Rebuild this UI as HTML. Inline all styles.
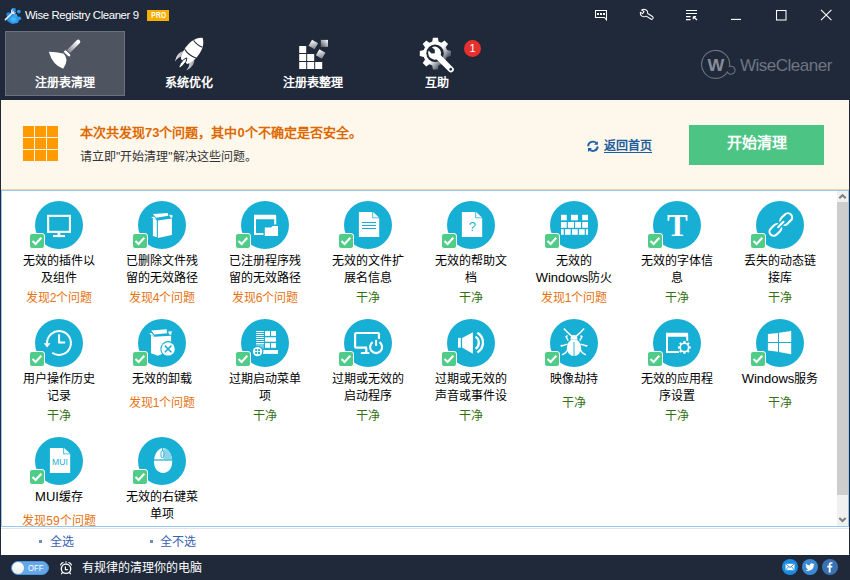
<!DOCTYPE html>
<html lang="zh-CN"><head><meta charset="utf-8">
<style>
*{margin:0;padding:0;box-sizing:border-box}
html,body{width:850px;height:580px;overflow:hidden;background:#202939;font-family:"Liberation Sans",sans-serif}
.abs{position:absolute}
#top{position:absolute;left:0;top:0;width:850px;height:100px;background:#202939}
.title{position:absolute;left:25px;top:7px;font-size:11.4px;letter-spacing:-0.4px;color:#fff;line-height:16px}
.pro{position:absolute;left:147px;top:10px;width:22px;height:11px;background:#f9ae00;color:#fff;font-size:8.6px;font-weight:bold;line-height:11px;text-align:center;letter-spacing:0.4px}
.tab{position:absolute;top:31px;width:120px;height:65px}
.tab.sel{background:#4e5460;border:1px solid #6b717b}
.tablbl{position:absolute;top:76px;width:120px;text-align:center;color:#fff;font-size:12px;font-weight:bold;line-height:15px}
#hdr{position:absolute;left:1px;top:100px;width:848px;height:90px;background:#fdf7ec;border-bottom:1px solid #f0d9a8}
#list{position:absolute;left:1px;top:190px;width:848px;height:337px;background:#fff;border:1px solid #99c6ee;overflow:hidden}
#sel{position:absolute;left:1px;top:527px;width:848px;height:28px;background:#fff;border-top:1px solid #fff}#sel:before{content:"";position:absolute;left:0;top:0;width:848px;height:1px;background:#e4e4e4}
#status{position:absolute;left:0;top:555px;width:850px;height:25px;background:#202939}
.ic{position:absolute}
.cb{position:absolute;width:16px;height:16px}
.cb svg{display:block}
.lb,.st{position:absolute;width:100px;text-align:center;font-size:12px;line-height:17px;white-space:nowrap}
.lb{color:#000}
.st.ok{color:#356f14}
.lat{font-size:13px}
.st.bad{color:#e67312}
.h1{left:79px;top:24px;font-size:13px;font-weight:bold;color:#dd6a00;line-height:17px;white-space:nowrap}
.h2{left:79px;top:49px;font-size:12px;color:#333;line-height:17px;white-space:nowrap}
.lnk{left:603px;top:38px;font-size:12px;text-underline-offset:2px;color:#1f5d9c;line-height:17px;text-decoration:underline;font-weight:bold}
.btn{left:688px;top:25px;width:135px;height:40px;background:#4cc584;color:#fff;font-size:15px;font-weight:bold;text-align:center;line-height:36px}
.selt{top:6px;font-size:12px;line-height:17px;color:#3a62b0}
</style></head><body>
<div id="top">
  <svg class="abs" style="left:3px;top:6px" width="20" height="20" viewBox="0 0 20 20">
    <defs><radialGradient id="tg" cx="0.5" cy="0.6" r="0.6"><stop offset="0" stop-color="#4cc3ff"/><stop offset="1" stop-color="#1570d8"/></radialGradient></defs>
    <path d="M4 8 L9 6 L13 9 L17 12 L15 17 L9 18 L4 15 Z" fill="url(#tg)"/>
    <circle cx="10.7" cy="4" r="2.2" fill="#2a8fe6"/><circle cx="15.8" cy="5.6" r="1.9" fill="#2a9af0"/><circle cx="16.2" cy="12.3" r="1.9" fill="#2a9af0"/><circle cx="12.5" cy="9.5" r="1.8" fill="#3aa8f6"/>
    <circle cx="5.5" cy="8.5" r="2.2" fill="#1f86e8"/><path d="M2.4 13.6 L10.4 5.8" stroke="#e6eef6" stroke-width="1.6" stroke-linecap="round"/><path d="M9.6 3.6 A2 2 0 1 0 12.4 6.2" fill="none" stroke="#e6eef6" stroke-width="1.2"/>
  </svg>
  <div class="title">Wise Registry Cleaner 9</div>
  <div class="pro"><span style="display:inline-block;transform:scaleX(0.78);margin-left:1px">PRO</span></div>
  <div class="tab sel" style="left:5px"></div>
  <svg class="abs" style="left:44px;top:34px" width="42" height="38" viewBox="0 0 42 38">
    <defs><linearGradient id="hg" x1="1" y1="0" x2="0" y2="1"><stop offset="0" stop-color="#fff"/><stop offset="1" stop-color="#8a8d93"/></linearGradient></defs>
    <path d="M24.5 17.5 L34.2 7.8" stroke="url(#hg)" stroke-width="4.2" stroke-linecap="round"/>
    
    <path d="M4.8 17.8 Q12 17.8 19.4 19.6 Q25.8 25 19.2 34.8 Q8.5 31 4.8 17.8 Z" fill="#fff"/><rect x="-4.3" y="-1.7" width="8.6" height="3.4" rx="1.7" transform="translate(23.2 19.4) rotate(42)" fill="#fff" stroke="#4e5460" stroke-width="0.9"/>
  </svg>
  <div class="tablbl" style="left:5px">注册表清理</div>
  <svg class="abs" style="left:170px;top:34px" width="40" height="38" viewBox="0 0 40 38">
    <defs><linearGradient id="fg" x1="0" y1="1" x2="1" y2="0"><stop offset="0" stop-color="#ffffff"/><stop offset="1" stop-color="#80848c"/></linearGradient></defs>
    <g transform="translate(21.5 18) rotate(38)">
      <path d="M-6.4 3.6 Q-11.8 9 -7.2 17.8 Q-7.4 12 -4.6 9.6 Z" fill="url(#fg)"/>
      <path d="M6.4 3.6 Q11.8 9 7.2 17.8 Q7.4 12 4.6 9.6 Z" fill="url(#fg)"/>
      <path d="M0 -18 C6 -14 8.2 -6 7.2 3 C6.5 8 5 11 4 12 L-4 12 C-5 11 -6.5 8 -7.2 3 C-8.2 -6 -6 -14 0 -18 Z" fill="#fff"/>
      <path d="M-5.6 -10.5 Q0 -8.5 5.6 -10.5" fill="none" stroke="#202939" stroke-width="1"/>
      <path d="M-7.2 2 Q0 4.5 7.2 2" fill="none" stroke="#202939" stroke-width="1"/>
      <path d="M0 7.4 Q2.4 10 1.6 16 Q0.8 20 0 20.2 Q-0.8 20 -1.6 16 Q-2.4 10 0 7.4 Z" fill="#fff" stroke="#202939" stroke-width="0.9"/>
    </g>
  </svg>
  <svg class="abs" style="left:293px;top:34px" width="40" height="38" viewBox="0 0 40 38">
    <defs><linearGradient id="sg" x1="0" y1="0" x2="1" y2="1"><stop offset="0" stop-color="#fff"/><stop offset="1" stop-color="#7c8088"/></linearGradient>
    <linearGradient id="sg2" x1="1" y1="0" x2="0" y2="1"><stop offset="0" stop-color="#fff"/><stop offset="1" stop-color="#50545c"/></linearGradient></defs>
    <rect x="6.2" y="12" width="7" height="7" fill="#fff"/>
    <rect x="6.2" y="20" width="7" height="7" fill="#fff"/><rect x="14.2" y="20" width="7" height="7" fill="#fff"/>
    <rect x="6.2" y="28" width="7" height="7" fill="#fff"/><rect x="14.2" y="28" width="7" height="7" fill="#fff"/><rect x="22.2" y="28" width="7" height="7" fill="#fff"/>
    <rect x="-3.5" y="-3.5" width="7" height="7" fill="url(#sg)" transform="translate(20.3 10.5) rotate(30)"/>
    <rect x="-3.5" y="-3.5" width="7" height="7" fill="url(#sg)" transform="translate(27.6 20) rotate(30)"/>
    <rect x="27.8" y="5.9" width="7.2" height="7" fill="url(#sg2)"/>
  </svg>
  <svg class="abs" style="left:415px;top:34px" width="44" height="40" viewBox="0 0 44 40">
    <defs><linearGradient id="gg" x1="0.15" y1="0.15" x2="0.95" y2="0.85"><stop offset="0.5" stop-color="#fff"/><stop offset="0.9" stop-color="#2a3342"/></linearGradient></defs>
    <g transform="translate(20.4 19.6) scale(1.04)">
      <path id="gear" d="M-2.4 -15.2 L2.4 -15.2 L3 -11.6 L5.8 -10.4 L8.8 -12.6 L12.2 -9.2 L10 -6.2 L11.2 -3.4 L15 -2.6 L15 2.4 L11.2 3.2 L10 6 L12.2 9 L8.8 12.4 L5.8 10.2 L3 11.4 L2.4 15.2 L-2.4 15.2 L-3 11.4 L-5.8 10.2 L-8.8 12.4 L-12.2 9 L-10 6 L-11.2 3.2 L-15 2.4 L-15 -2.6 L-11.2 -3.4 L-10 -6.2 L-12.2 -9.2 L-8.8 -12.6 L-5.8 -10.4 L-3 -11.6 Z" fill="url(#gg)"/>
      <circle cx="-0.3" cy="-0.3" r="8.4" fill="#202939"/>
    </g>
    <g transform="translate(19.6 19.2) rotate(-45)">
      <path d="M-2.4 -6.1 A6.5 6.5 0 1 0 2.4 -6.1 L2.4 -2 L0 0.2 L-2.4 -2 Z" fill="#fff"/>
      <rect x="-2.9" y="3" width="5.8" height="23" rx="2.9" fill="#fff"/>
      <circle cx="0" cy="22.8" r="1.4" fill="#202939"/>
    </g>
  </svg>
  <div class="abs" style="left:464px;top:40px;width:17px;height:17px;border-radius:50%;background:#e8302e;color:#fff;font-size:11px;line-height:17px;text-align:center">1</div>
  <svg class="abs" style="left:700px;top:49px" width="40" height="32" viewBox="0 0 40 32">
    <path d="M29.44 17.52 A14 14 0 1 0 27.40 22.94 A4 4 0 1 0 29.44 17.52 Z" fill="none" stroke="#6c727e" stroke-width="1.1"/>
    <text x="15.8" y="21.9" text-anchor="middle" font-family="Liberation Sans" font-weight="bold" font-size="16.5" fill="#888e99" transform="translate(15.8 0) scale(1.08 1) translate(-15.8 0)">W</text>
  </svg>
  <div class="abs" style="left:740px;top:55px;font-size:17px;line-height:22px;color:#6f7581;letter-spacing:-0.5px">WiseCleaner</div>
  <svg class="abs" style="left:590px;top:5px" width="70" height="20" viewBox="0 0 70 20">
    <path d="M5.5 5.5 H16.5 V14.8 L14.4 12.5 H5.5 Z" fill="none" stroke="#fff" stroke-width="1.05"/>
    <rect x="7" y="8" width="2" height="2" fill="#fff"/><rect x="10" y="8" width="2" height="2" fill="#fff"/><rect x="13" y="8" width="2" height="2" fill="#fff"/>
    <path transform="translate(54 8) rotate(32)" d="M-3.55 -1.3 L-0.8 -1.3 L-0.8 1.3 L-3.55 1.3 A3.8 3.8 0 0 0 3.45 1.5 L9 1.5 A1.5 1.5 0 0 0 9 -1.5 L3.45 -1.5 A3.8 3.8 0 0 0 -3.55 -1.3 Z" fill="none" stroke="#fff" stroke-width="1.05" stroke-linejoin="round"/>
  </svg>
  <svg class="abs" style="left:680px;top:5px" width="170" height="20" viewBox="0 0 170 20">
    <path d="M6 5.5 H17 M6 8.5 H17 M6 11.7 H10.6 M6 14.7 H10.6" stroke="#fff" stroke-width="1.2"/>
    <path d="M13.3 11.6 H16 M13.3 11.6 V14.3 M13.5 11.8 L17 15" stroke="#fff" stroke-width="1.2"/>
    <path d="M51 14.4 H61" stroke="#fff" stroke-width="1.1"/>
    <rect x="96.5" y="5.5" width="9.5" height="9.5" fill="none" stroke="#fff" stroke-width="1.05"/>
    <path d="M141 4.8 L151.4 15.2 M151.4 4.8 L141 15.2" stroke="#fff" stroke-width="1.1"/>
  </svg>
  <div class="tablbl" style="left:129px">系统优化</div>
  <div class="tablbl" style="left:253px">注册表整理</div>
  <div class="tablbl" style="left:377px">互助</div>
</div>
<div id="hdr">
  <div class="abs" style="left:22px;top:26px;width:35px;height:35px;background:#fdf7ec">
    <div class="abs" style="left:0;top:0;width:11px;height:11px;background:#ff9b00"></div>
    <div class="abs" style="left:12px;top:0;width:11px;height:11px;background:#ff9b00"></div>
    <div class="abs" style="left:24px;top:0;width:11px;height:11px;background:#ff9b00"></div>
    <div class="abs" style="left:0;top:12px;width:11px;height:11px;background:#ff9b00"></div>
    <div class="abs" style="left:12px;top:12px;width:11px;height:11px;background:#ff9b00"></div>
    <div class="abs" style="left:24px;top:12px;width:11px;height:11px;background:#ff9b00"></div>
    <div class="abs" style="left:0;top:24px;width:11px;height:11px;background:#ff9b00"></div>
    <div class="abs" style="left:12px;top:24px;width:11px;height:11px;background:#ff9b00"></div>
    <div class="abs" style="left:24px;top:24px;width:11px;height:11px;background:#ff9b00"></div>
  </div>
  <div class="abs h1">本次共发现73个问题，其中0个不确定是否安全。</div>
  <div class="abs h2">请立即"开始清理"解决这些问题。</div>
  <svg class="abs" style="left:586px;top:40px" width="13" height="13" viewBox="0 0 13 13"><path d="M1.1 6.3 A4.8 4.8 0 0 1 9.6 3.4" fill="none" stroke="#1f62a8" stroke-width="1.9"/><path d="M10.7 6.4 A4.8 4.8 0 0 1 2.2 9.2" fill="none" stroke="#1f62a8" stroke-width="1.9"/><path d="M10.9 1.2 V4.7 H7 Z" fill="#1f62a8"/><path d="M1 8.1 H4.9 L1 12 Z" fill="#1f62a8"/></svg>
  <div class="abs lnk">返回首页</div>
  <div class="abs btn">开始清理</div>
</div>
<div id="list">
  <div class="abs" style="left:835px;top:0;width:11px;height:335px;background:#f0f0f0"></div>
  <div class="abs" style="left:835px;top:11px;width:11px;height:293px;background:#cdcdcd"></div>
  <svg class="abs" style="left:835px;top:0" width="11" height="11" viewBox="0 0 11 11"><path d="M2.3 7.2 L5.5 4.2 L8.7 7.2" fill="none" stroke="#808080" stroke-width="2.1"/></svg>
  <svg class="abs" style="left:835px;top:324px" width="11" height="11" viewBox="0 0 11 11"><path d="M2.3 3 L5.5 6 L8.7 3" fill="none" stroke="#808080" stroke-width="2.1"/></svg>
</div>
<svg class="ic" style="left:35px;top:201px" width="48" height="48" viewBox="0 0 48 48"><circle cx="24" cy="24" r="24" fill="#18afd4"/><rect x="13.15" y="14.85" width="21.8" height="16" fill="none" stroke="#fff" stroke-width="2.1"/><rect x="22.6" y="31.8" width="2.6" height="2.4" fill="#fff"/><rect x="18" y="34" width="12" height="2.1" fill="#fff"/></svg>
<div class="cb" style="left:29px;top:233px"><svg width="16" height="16" viewBox="0 0 16 16"><rect x="0.5" y="0.5" width="15" height="15" rx="2.5" fill="#50cb88" stroke="#fff" stroke-width="1"/><path d="M3.5 8 L6.6 11 L12.3 4.8" fill="none" stroke="#fff" stroke-width="2.1"/></svg></div>
<div class="lb" style="left:9px;top:253px">无效的插件以</div>
<div class="lb" style="left:9px;top:270px">及组件</div>
<div class="st bad" style="left:9px;top:290px">发现2个问题</div>
<svg class="ic" style="left:138px;top:201px" width="48" height="48" viewBox="0 0 48 48"><circle cx="24" cy="24" r="24" fill="#18afd4"/><path d="M14.9 17.2 L18.8 19.4 L18.8 36.2 L14.9 34.9 Z" fill="#fff"/><path d="M19.9 19.4 L33.9 17.5 L33.9 34 L19.9 37.1 Z" fill="#fff"/><path d="M14.9 13.1 L29.8 12.1 L30.3 14.7 L18.2 16.8 Z" fill="#fff"/><path d="M13 16.1 L16.3 15.8 L18.8 19.2 L15.2 17.5 Z" fill="#fff"/><path d="M31.2 13.6 L34.8 14.4 L33.9 17.3 L32.3 16.1 Z" fill="#fff"/></svg>
<div class="cb" style="left:132px;top:233px"><svg width="16" height="16" viewBox="0 0 16 16"><rect x="0.5" y="0.5" width="15" height="15" rx="2.5" fill="#50cb88" stroke="#fff" stroke-width="1"/><path d="M3.5 8 L6.6 11 L12.3 4.8" fill="none" stroke="#fff" stroke-width="2.1"/></svg></div>
<div class="lb" style="left:112px;top:253px">已删除文件残</div>
<div class="lb" style="left:112px;top:270px">留的无效路径</div>
<div class="st bad" style="left:112px;top:290px">发现4个问题</div>
<svg class="ic" style="left:241px;top:201px" width="48" height="48" viewBox="0 0 48 48"><circle cx="24" cy="24" r="24" fill="#18afd4"/><path d="M13 13.8 H34 Q35.2 13.8 35.2 15 V25 H33.2 V18.3 H15 V32 H24 V34 H13 Z" fill="#fff"/><path d="M22.4 25.3 H29.4 L31.2 23.5 H38.4 V36.4 H22.4 Z" fill="#18afd4"/><path d="M23.8 26.6 H30 L31.8 24.9 H37 V35 H23.8 Z" fill="#fff"/></svg>
<div class="cb" style="left:235px;top:233px"><svg width="16" height="16" viewBox="0 0 16 16"><rect x="0.5" y="0.5" width="15" height="15" rx="2.5" fill="#50cb88" stroke="#fff" stroke-width="1"/><path d="M3.5 8 L6.6 11 L12.3 4.8" fill="none" stroke="#fff" stroke-width="2.1"/></svg></div>
<div class="lb" style="left:215px;top:253px">已注册程序残</div>
<div class="lb" style="left:215px;top:270px">留的无效路径</div>
<div class="st bad" style="left:215px;top:290px">发现6个问题</div>
<svg class="ic" style="left:344px;top:201px" width="48" height="48" viewBox="0 0 48 48"><circle cx="24" cy="24" r="24" fill="#18afd4"/><path d="M14.9 11 H28.3 V17.3 H35.2 V35.9 H14.9 Z" fill="#fff"/><path d="M29.1 11 L35 16.6 H29.1 Z" fill="#fff"/><path d="M18 21.5 H32 M18 24.5 H32 M18 27.5 H32" stroke="#18afd4" stroke-width="1"/></svg>
<div class="cb" style="left:338px;top:233px"><svg width="16" height="16" viewBox="0 0 16 16"><rect x="0.5" y="0.5" width="15" height="15" rx="2.5" fill="#50cb88" stroke="#fff" stroke-width="1"/><path d="M3.5 8 L6.6 11 L12.3 4.8" fill="none" stroke="#fff" stroke-width="2.1"/></svg></div>
<div class="lb" style="left:318px;top:253px">无效的文件扩</div>
<div class="lb" style="left:318px;top:270px">展名信息</div>
<div class="st ok" style="left:318px;top:290px">干净</div>
<svg class="ic" style="left:447px;top:201px" width="48" height="48" viewBox="0 0 48 48"><circle cx="24" cy="24" r="24" fill="#18afd4"/><path d="M14.9 11 H28.3 V17.3 H35.2 V35.9 H14.9 Z" fill="#fff"/><path d="M29.1 11 L35 16.6 H29.1 Z" fill="#fff"/><text x="25.3" y="29.8" text-anchor="middle" font-family="Liberation Sans" font-size="13" fill="#18afd4">?</text></svg>
<div class="cb" style="left:441px;top:233px"><svg width="16" height="16" viewBox="0 0 16 16"><rect x="0.5" y="0.5" width="15" height="15" rx="2.5" fill="#50cb88" stroke="#fff" stroke-width="1"/><path d="M3.5 8 L6.6 11 L12.3 4.8" fill="none" stroke="#fff" stroke-width="2.1"/></svg></div>
<div class="lb" style="left:421px;top:253px">无效的帮助文</div>
<div class="lb" style="left:421px;top:270px">档</div>
<div class="st ok" style="left:421px;top:290px">干净</div>
<svg class="ic" style="left:550px;top:201px" width="48" height="48" viewBox="0 0 48 48"><circle cx="24" cy="24" r="24" fill="#18afd4"/><rect x="11" y="13.8" width="5.70" height="5.50" fill="#fff"/><rect x="21" y="13.8" width="6.90" height="5.50" fill="#fff"/><rect x="32.2" y="13.8" width="5.80" height="5.50" fill="#fff"/><rect x="11" y="21" width="5.70" height="5.80" fill="#fff"/><rect x="17.9" y="21" width="6.10" height="5.80" fill="#fff"/><rect x="25.1" y="21" width="5.90" height="5.80" fill="#fff"/><rect x="32.2" y="21" width="5.80" height="5.80" fill="#fff"/><rect x="11" y="28.2" width="2.75" height="5.60" fill="#fff"/><rect x="15" y="28.2" width="5.70" height="5.60" fill="#fff"/><rect x="22" y="28.2" width="5.70" height="5.60" fill="#fff"/><rect x="28.9" y="28.2" width="5.80" height="5.60" fill="#fff"/><rect x="35.9" y="28.2" width="2.10" height="5.60" fill="#fff"/></svg>
<div class="cb" style="left:544px;top:233px"><svg width="16" height="16" viewBox="0 0 16 16"><rect x="0.5" y="0.5" width="15" height="15" rx="2.5" fill="#50cb88" stroke="#fff" stroke-width="1"/><path d="M3.5 8 L6.6 11 L12.3 4.8" fill="none" stroke="#fff" stroke-width="2.1"/></svg></div>
<div class="lb" style="left:524px;top:253px">无效的</div>
<div class="lb" style="left:524px;top:269px"><span class="lat">Windows</span>防火</div>
<div class="st bad" style="left:524px;top:290px">发现1个问题</div>
<svg class="ic" style="left:653px;top:201px" width="48" height="48" viewBox="0 0 48 48"><circle cx="24" cy="24" r="24" fill="#18afd4"/><text x="24.3" y="35.2" text-anchor="middle" font-family="Liberation Serif" font-weight="bold" font-size="31" fill="#fff">T</text></svg>
<div class="cb" style="left:647px;top:233px"><svg width="16" height="16" viewBox="0 0 16 16"><rect x="0.5" y="0.5" width="15" height="15" rx="2.5" fill="#50cb88" stroke="#fff" stroke-width="1"/><path d="M3.5 8 L6.6 11 L12.3 4.8" fill="none" stroke="#fff" stroke-width="2.1"/></svg></div>
<div class="lb" style="left:627px;top:253px">无效的字体信</div>
<div class="lb" style="left:627px;top:270px">息</div>
<div class="st ok" style="left:627px;top:290px">干净</div>
<svg class="ic" style="left:756px;top:201px" width="48" height="48" viewBox="0 0 48 48"><circle cx="24" cy="24" r="24" fill="#18afd4"/><g transform="translate(24.8 23.5) rotate(-45)"><rect x="1.05" y="-4.2" width="13.2" height="8.4" rx="4.2" fill="none" stroke="#fff" stroke-width="2.1"/><rect x="-14.25" y="-4.2" width="13.2" height="8.4" rx="4.2" fill="none" stroke="#fff" stroke-width="2.1"/><rect x="-6" y="-2.6" width="12" height="5.2" fill="#18afd4"/><rect x="-4.8" y="-1.05" width="9.6" height="2.1" rx="1" fill="#fff"/></g></svg>
<div class="cb" style="left:750px;top:233px"><svg width="16" height="16" viewBox="0 0 16 16"><rect x="0.5" y="0.5" width="15" height="15" rx="2.5" fill="#50cb88" stroke="#fff" stroke-width="1"/><path d="M3.5 8 L6.6 11 L12.3 4.8" fill="none" stroke="#fff" stroke-width="2.1"/></svg></div>
<div class="lb" style="left:730px;top:253px">丢失的动态链</div>
<div class="lb" style="left:730px;top:270px">接库</div>
<div class="st ok" style="left:730px;top:290px">干净</div>
<svg class="ic" style="left:35px;top:319px" width="48" height="48" viewBox="0 0 48 48"><circle cx="24" cy="24" r="24" fill="#18afd4"/><path d="M12.1 24.4 A11.9 11.9 0 1 1 17.2 33.75" fill="none" stroke="#fff" stroke-width="2"/><path d="M8.7 24.2 H15.6 L12.1 28.5 Z" fill="#fff"/><path d="M24.1 15.2 V23.6 H30.2" fill="none" stroke="#fff" stroke-width="2"/></svg>
<div class="cb" style="left:29px;top:351px"><svg width="16" height="16" viewBox="0 0 16 16"><rect x="0.5" y="0.5" width="15" height="15" rx="2.5" fill="#50cb88" stroke="#fff" stroke-width="1"/><path d="M3.5 8 L6.6 11 L12.3 4.8" fill="none" stroke="#fff" stroke-width="2.1"/></svg></div>
<div class="lb" style="left:9px;top:371px">用户操作历史</div>
<div class="lb" style="left:9px;top:388px">记录</div>
<div class="st ok" style="left:9px;top:408px">干净</div>
<svg class="ic" style="left:138px;top:319px" width="48" height="48" viewBox="0 0 48 48"><circle cx="24" cy="24" r="24" fill="#18afd4"/><path d="M13 16.1 L16.3 17.8 L33.1 16.7 V31 L20 36.8 L13 34.3 Z" fill="#fff"/><path d="M13.2 11.4 L28.7 10.3 L29 14.2 L16.3 15.5 Z" fill="#fff"/><path d="M11.3 14.2 L13.5 13.9 L16.3 17.3 L13 16.1 Z" fill="#fff"/><path d="M30.1 12.5 L33.9 12.2 L33.1 16.1 L31.2 15.3 Z" fill="#fff"/><circle cx="30.1" cy="29.9" r="7.8" fill="#18afd4"/><circle cx="30.1" cy="29.9" r="6.7" fill="#fff"/><path d="M26.8 26.6 L33.4 33.2 M33.4 26.6 L26.8 33.2" stroke="#18afd4" stroke-width="1.5"/></svg>
<div class="cb" style="left:132px;top:351px"><svg width="16" height="16" viewBox="0 0 16 16"><rect x="0.5" y="0.5" width="15" height="15" rx="2.5" fill="#50cb88" stroke="#fff" stroke-width="1"/><path d="M3.5 8 L6.6 11 L12.3 4.8" fill="none" stroke="#fff" stroke-width="2.1"/></svg></div>
<div class="lb" style="left:112px;top:371px">无效的卸载</div>
<div class="st bad" style="left:112px;top:395px">发现1个问题</div>
<svg class="ic" style="left:241px;top:319px" width="48" height="48" viewBox="0 0 48 48"><circle cx="24" cy="24" r="24" fill="#18afd4"/><rect x="15.1" y="25" width="7.7" height="4.5" fill="#7ccfe6"/><rect x="15.1" y="12" width="7.7" height="1" fill="#fff"/><rect x="15.1" y="14" width="7.7" height="1" fill="#fff"/><rect x="15.1" y="16" width="7.7" height="1" fill="#fff"/><rect x="15.1" y="18" width="7.7" height="1" fill="#fff"/><rect x="15.1" y="20" width="7.7" height="1" fill="#fff"/><rect x="15.1" y="22" width="7.7" height="1" fill="#fff"/><rect x="15.1" y="24" width="7.7" height="1" fill="#fff"/><rect x="24" y="12.1" width="5" height="4.8" fill="#fff"/><rect x="30" y="12.1" width="5" height="4.8" fill="#fff"/><rect x="24" y="18.3" width="11" height="4.4" fill="#fff"/><rect x="24" y="24.1" width="5" height="4.7" fill="#fff"/><rect x="30" y="24.1" width="5" height="4.7" fill="#fff"/><rect x="20" y="31" width="17" height="3.9" fill="#fff"/><circle cx="16.6" cy="32.6" r="5.9" fill="#18afd4"/><circle cx="16.6" cy="32.6" r="4.7" fill="#fff"/><rect x="14.2" y="30.2" width="2" height="1.9" fill="#18afd4"/><rect x="17" y="30.2" width="2" height="1.9" fill="#18afd4"/><rect x="14.2" y="33" width="2" height="1.9" fill="#18afd4"/><rect x="17" y="33" width="2" height="1.9" fill="#18afd4"/></svg>
<div class="cb" style="left:235px;top:351px"><svg width="16" height="16" viewBox="0 0 16 16"><rect x="0.5" y="0.5" width="15" height="15" rx="2.5" fill="#50cb88" stroke="#fff" stroke-width="1"/><path d="M3.5 8 L6.6 11 L12.3 4.8" fill="none" stroke="#fff" stroke-width="2.1"/></svg></div>
<div class="lb" style="left:215px;top:371px">过期启动菜单</div>
<div class="lb" style="left:215px;top:388px">项</div>
<div class="st ok" style="left:215px;top:408px">干净</div>
<svg class="ic" style="left:344px;top:319px" width="48" height="48" viewBox="0 0 48 48"><circle cx="24" cy="24" r="24" fill="#18afd4"/><path d="M23 28.6 H12.2 Q11.1 28.6 11.1 27.5 V15.1 Q11.1 14 12.2 14 H33.9 Q35 14 35 15.1 V20" fill="none" stroke="#fff" stroke-width="2.2"/><rect x="21.2" y="28.6" width="2.2" height="4.6" fill="#fff"/><rect x="16.9" y="33" width="8.4" height="2" fill="#fff"/><circle cx="32.1" cy="28.1" r="8.3" fill="#18afd4"/><path d="M28.6 23.2 A6 6 0 1 0 35.6 23.2" fill="none" stroke="#fff" stroke-width="2.2"/><path d="M32.1 20.9 V26.9" stroke="#fff" stroke-width="2"/></svg>
<div class="cb" style="left:338px;top:351px"><svg width="16" height="16" viewBox="0 0 16 16"><rect x="0.5" y="0.5" width="15" height="15" rx="2.5" fill="#50cb88" stroke="#fff" stroke-width="1"/><path d="M3.5 8 L6.6 11 L12.3 4.8" fill="none" stroke="#fff" stroke-width="2.1"/></svg></div>
<div class="lb" style="left:318px;top:371px">过期或无效的</div>
<div class="lb" style="left:318px;top:388px">启动程序</div>
<div class="st ok" style="left:318px;top:408px">干净</div>
<svg class="ic" style="left:447px;top:319px" width="48" height="48" viewBox="0 0 48 48"><circle cx="24" cy="24" r="24" fill="#18afd4"/><rect x="11" y="18.9" width="2.8" height="9.7" fill="#fff"/><path d="M15.1 18.9 L25.9 13.3 V34.7 L15.1 28.6 Z" fill="#fff"/><path d="M28.6 17.6 A7.4 7.4 0 0 1 28.6 29.8" fill="none" stroke="#fff" stroke-width="2.3"/><path d="M30.4 13.8 A11.4 11.4 0 0 1 30.4 33.4" fill="none" stroke="#fff" stroke-width="2.3"/></svg>
<div class="cb" style="left:441px;top:351px"><svg width="16" height="16" viewBox="0 0 16 16"><rect x="0.5" y="0.5" width="15" height="15" rx="2.5" fill="#50cb88" stroke="#fff" stroke-width="1"/><path d="M3.5 8 L6.6 11 L12.3 4.8" fill="none" stroke="#fff" stroke-width="2.1"/></svg></div>
<div class="lb" style="left:421px;top:371px">过期或无效的</div>
<div class="lb" style="left:421px;top:388px">声音或事件设</div>
<div class="st ok" style="left:421px;top:408px">干净</div>
<svg class="ic" style="left:550px;top:319px" width="48" height="48" viewBox="0 0 48 48"><circle cx="24" cy="24" r="24" fill="#18afd4"/><ellipse cx="24" cy="28.7" rx="7.2" ry="8.4" fill="#fff"/><path d="M20.4 20.6 Q20.8 16 24 16 Q27.2 16 27.6 20.6 Z" fill="#fff"/><path d="M24 23.2 V37.2" stroke="#18afd4" stroke-width="0.9"/><path d="M22 17.4 Q17 13 13.8 9.4 M26 17.4 Q31 13 34.2 9.4" fill="none" stroke="#fff" stroke-width="1.5"/><path d="M18.2 21.6 L16 17.6 L17.6 16.6 M29.8 21.6 L32 17.6 L30.4 16.6 M17.4 25.2 L11.4 27 L10.8 26 M30.6 25.2 L36.6 27 L37.2 26 M18 30 L15.8 33.6 L12.2 35.8 M30 30 L32.2 33.6 L35.8 35.8" fill="none" stroke="#fff" stroke-width="1.4" stroke-linejoin="round"/></svg>
<div class="cb" style="left:544px;top:351px"><svg width="16" height="16" viewBox="0 0 16 16"><rect x="0.5" y="0.5" width="15" height="15" rx="2.5" fill="#50cb88" stroke="#fff" stroke-width="1"/><path d="M3.5 8 L6.6 11 L12.3 4.8" fill="none" stroke="#fff" stroke-width="2.1"/></svg></div>
<div class="lb" style="left:524px;top:371px">映像劫持</div>
<div class="st ok" style="left:524px;top:395px">干净</div>
<svg class="ic" style="left:653px;top:319px" width="48" height="48" viewBox="0 0 48 48"><circle cx="24" cy="24" r="24" fill="#18afd4"/><path d="M13 13.8 H34 Q35.2 13.8 35.2 15 V24 H33.2 V17.8 H15 V31.9 H26 V33.9 H13 Z" fill="#fff"/><circle cx="31.4" cy="28.4" r="7.2" fill="#18afd4"/><path d="M36.13 27.13 L37.82 27.38 L37.82 29.42 L36.13 29.67 L35.64 30.85 L36.66 32.22 L35.22 33.66 L33.85 32.64 L32.67 33.13 L32.42 34.82 L30.38 34.82 L30.13 33.13 L28.95 32.64 L27.58 33.66 L26.14 32.22 L27.16 30.85 L26.67 29.67 L24.98 29.42 L24.98 27.38 L26.67 27.13 L27.16 25.95 L26.14 24.58 L27.58 23.14 L28.95 24.16 L30.13 23.67 L30.38 21.98 L32.42 21.98 L32.67 23.67 L33.85 24.16 L35.22 23.14 L36.66 24.58 L35.64 25.95 Z" fill="#fff"/><circle cx="31.4" cy="28.4" r="3.4" fill="#18afd4"/></svg>
<div class="cb" style="left:647px;top:351px"><svg width="16" height="16" viewBox="0 0 16 16"><rect x="0.5" y="0.5" width="15" height="15" rx="2.5" fill="#50cb88" stroke="#fff" stroke-width="1"/><path d="M3.5 8 L6.6 11 L12.3 4.8" fill="none" stroke="#fff" stroke-width="2.1"/></svg></div>
<div class="lb" style="left:627px;top:371px">无效的应用程</div>
<div class="lb" style="left:627px;top:388px">序设置</div>
<div class="st ok" style="left:627px;top:408px">干净</div>
<svg class="ic" style="left:756px;top:319px" width="48" height="48" viewBox="0 0 48 48"><circle cx="24" cy="24" r="24" fill="#18afd4"/><path d="M11.9 15.1 L22 13.9 V23 H11.9 Z M23 13.7 L35.2 11.9 V23 H23 Z M11.9 24 H22 V32.8 L11.9 31.4 Z M23 24 H35.2 V35.2 L23 33 Z" fill="#fff"/></svg>
<div class="cb" style="left:750px;top:351px"><svg width="16" height="16" viewBox="0 0 16 16"><rect x="0.5" y="0.5" width="15" height="15" rx="2.5" fill="#50cb88" stroke="#fff" stroke-width="1"/><path d="M3.5 8 L6.6 11 L12.3 4.8" fill="none" stroke="#fff" stroke-width="2.1"/></svg></div>
<div class="lb" style="left:730px;top:370px"><span class="lat">Windows</span>服务</div>
<div class="st ok" style="left:730px;top:395px">干净</div>
<svg class="ic" style="left:35px;top:437px" width="48" height="48" viewBox="0 0 48 48"><circle cx="24" cy="24" r="24" fill="#18afd4"/><path d="M14.9 11 H28.3 V17.3 H35.2 V35.9 H14.9 Z" fill="#fff"/><path d="M29.1 11 L35 16.6 H29.1 Z" fill="#fff"/><text x="25" y="28.2" text-anchor="middle" font-family="Liberation Sans" font-size="8.6" fill="#18afd4">MUI</text></svg>
<div class="cb" style="left:29px;top:469px"><svg width="16" height="16" viewBox="0 0 16 16"><rect x="0.5" y="0.5" width="15" height="15" rx="2.5" fill="#50cb88" stroke="#fff" stroke-width="1"/><path d="M3.5 8 L6.6 11 L12.3 4.8" fill="none" stroke="#fff" stroke-width="2.1"/></svg></div>
<div class="lb" style="left:9px;top:488px"><span class="lat">MUI</span>缓存</div>
<div class="st bad" style="left:9px;top:513px">发现59个问题</div>
<svg class="ic" style="left:138px;top:437px" width="48" height="48" viewBox="0 0 48 48"><circle cx="24" cy="24" r="24" fill="#18afd4"/><defs><clipPath id="mclip"><path d="M25.1 11 C29.6 11 33.8 16.5 34.2 24 C34.5 31 30.5 36 25.1 36 C19.7 36 15.7 31 16 24 C16.4 16.5 20.6 11 25.1 11 Z"/></clipPath></defs><g clip-path="url(#mclip)"><rect x="14" y="9" width="22" height="30" fill="#fff"/><rect x="25.4" y="9" width="12" height="13.4" fill="#8bd5e8"/><rect x="14" y="22.4" width="22" height="1.2" fill="#18afd4"/></g><rect x="24" y="10" width="0.9" height="4" fill="#18afd4"/><rect x="23" y="13.9" width="2.8" height="6.6" rx="1.4" fill="#fff" stroke="#18afd4" stroke-width="0.9"/></svg>
<div class="cb" style="left:132px;top:469px"><svg width="16" height="16" viewBox="0 0 16 16"><rect x="0.5" y="0.5" width="15" height="15" rx="2.5" fill="#50cb88" stroke="#fff" stroke-width="1"/><path d="M3.5 8 L6.6 11 L12.3 4.8" fill="none" stroke="#fff" stroke-width="2.1"/></svg></div>
<div class="lb" style="left:112px;top:489px">无效的右键菜</div>
<div class="lb" style="left:112px;top:506px">单项</div>
<div id="sel">
  <div class="abs" style="left:38px;top:12px;width:3px;height:3px;background:#6f8db2"></div>
  <div class="abs selt" style="left:49px">全选</div>
  <div class="abs" style="left:149px;top:12px;width:3px;height:3px;background:#6f8db2"></div>
  <div class="abs selt" style="left:159px">全不选</div>
</div>
<div id="status">
  <div class="abs" style="left:11px;top:6px;width:38px;height:14px;border-radius:7px;background:#64a8ea;border:1px solid #4b93de"></div>
  <div class="abs" style="left:12px;top:7px;width:12px;height:12px;border-radius:6px;background:linear-gradient(#ffffff,#ececec)"></div>
  <div class="abs" style="left:27.5px;top:6px;font-size:9.4px;line-height:14px;color:#fff;transform:scaleX(0.82);transform-origin:0 0">OFF</div>
  <svg class="abs" style="left:59px;top:6px" width="14" height="14" viewBox="0 0 14 14"><circle cx="7" cy="7.7" r="4.7" fill="none" stroke="#fff" stroke-width="1.4"/><path d="M6.4 5.6 V8.6 H8.8" fill="none" stroke="#fff" stroke-width="1.2"/><path d="M1 4.9 A3.8 3.8 0 0 1 5.1 0.9 Z M13 4.9 A3.8 3.8 0 0 0 8.9 0.9 Z" fill="#fff"/><rect x="6.3" y="0.2" width="1.4" height="1.5" fill="#ccc"/><path d="M3.6 11.3 L2.3 13.2 M10.4 11.3 L11.7 13.2" stroke="#fff" stroke-width="1.3"/></svg>
  <div class="abs" style="left:82px;top:5px;font-size:12px;line-height:17px;color:#fff">有规律的清理你的电脑</div>
  <svg class="abs" style="left:782px;top:4px" width="16" height="16" viewBox="0 0 16 16"><circle cx="8" cy="8" r="8" fill="#1a8be2"/><rect x="3.5" y="4.8" width="9" height="6.4" fill="#fff"/><path d="M3.8 5 L8 8.5 L12.2 5 M3.8 11 L6.6 7.6 M12.2 11 L9.4 7.6" fill="none" stroke="#1a8be2" stroke-width="0.9"/></svg>
  <svg class="abs" style="left:802px;top:4px" width="16" height="16" viewBox="0 0 16 16"><circle cx="8" cy="8" r="8" fill="#3b88d3"/><path d="M12.6 5.2c-.35.15-.7.25-1.1.3.4-.24.7-.6.84-1.05-.37.22-.78.38-1.2.46A1.9 1.9 0 0 0 7.9 6.6 5.4 5.4 0 0 1 4 4.6a1.9 1.9 0 0 0 .6 2.55c-.3 0-.6-.1-.86-.24 0 .92.66 1.7 1.53 1.87-.28.08-.58.1-.86.03.24.76.95 1.3 1.78 1.33A3.8 3.8 0 0 1 3.4 11a5.4 5.4 0 0 0 8.3-4.8c.37-.27.7-.6.95-1z" fill="#fff"/></svg>
  <svg class="abs" style="left:822px;top:4px" width="16" height="16" viewBox="0 0 16 16"><circle cx="8" cy="8" r="8" fill="#3a71b3"/><path d="M8.6 13.5V8.6h1.6l.25-1.8H8.6V5.7c0-.5.15-.85.9-.85h.95V3.2c-.17 0-.73-.07-1.4-.07-1.38 0-2.3.84-2.3 2.38v1.3H5.2v1.8h1.55v4.9z" fill="#fff"/></svg>
</div>
</body></html>
